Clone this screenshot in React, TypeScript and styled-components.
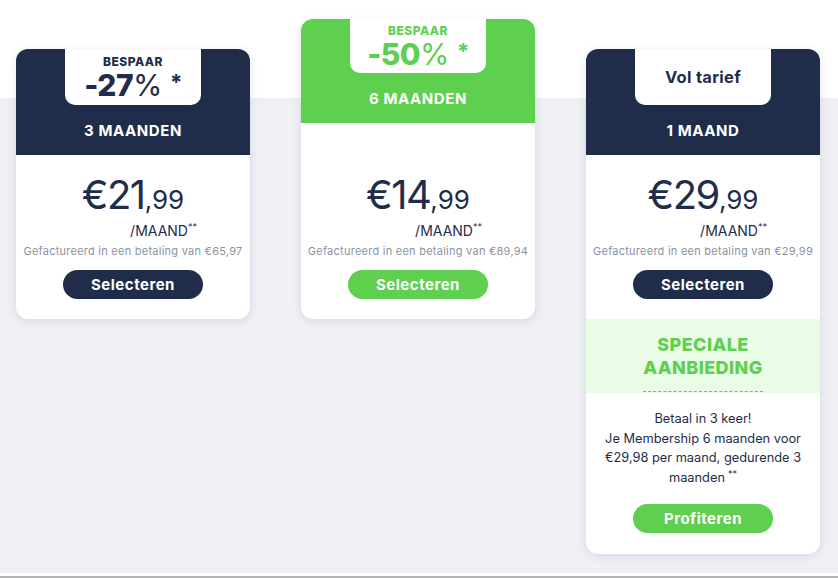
import React from "react";
import styled, { createGlobalStyle, css } from "styled-components";

const NAVY = "#1f2d4a";
const GREEN = "#5ecf4f";

const GlobalStyle = createGlobalStyle`
  html, body {
    margin: 0;
    padding: 0;
    background: #ffffff;
    font-family: "Inter", "Noto Sans", sans-serif;
    color: ${NAVY};
  }
`;

type Plan = {
  months: string;
  accent: "navy" | "green";
  save?: string;
  label?: string;
  whole: string;
  cents: string;
  billed: string;
  featured?: boolean;
  special?: boolean;
};

const plans: Plan[] = [
  { months: "3 MAANDEN", accent: "navy", save: "-27", whole: "€21", cents: ",99", billed: "€65,97" },
  { months: "6 MAANDEN", accent: "green", save: "-50", whole: "€14", cents: ",99", billed: "€89,94", featured: true },
  { months: "1 MAAND", accent: "navy", label: "Vol tarief", whole: "€29", cents: ",99", billed: "€29,99", special: true },
];

// Pricing section with the split white / grey backdrop
const Section = styled.section`
  height: 573px;
  box-sizing: border-box;
  padding: 19px 18px 0 16px;
  background: linear-gradient(#ffffff 0, #ffffff 98px, #eef0f4 98px);
  display: grid;
  grid-template-columns: repeat(3, 234px);
  column-gap: 51px;
  align-items: start;
`;

const Divider = styled.div`
  height: 3px;
  background: #ffffff;
  border-bottom: 2px solid #b3b3b3;
`;

const Card = styled.div<{ $featured?: boolean }>`
  margin-top: ${(p) => (p.$featured ? "0" : "30px")};
  background: #ffffff;
  border-radius: 12px;
  overflow: hidden;
  box-shadow: 0 2px 9px rgba(31, 45, 74, 0.12);
  display: flex;
  flex-direction: column;
`;

const Header = styled.div<{ $accent: "navy" | "green" }>`
  background: ${(p) => (p.$accent === "green" ? GREEN : NAVY)};
  display: flex;
  flex-direction: column;
  align-items: center;
`;

const Tab = styled.div<{ $featured?: boolean; $accent: "navy" | "green" }>`
  width: 136px;
  height: ${(p) => (p.$featured ? "54px" : "56px")};
  box-sizing: border-box;
  padding-top: 4px;
  background: #ffffff;
  border-radius: 0 0 10px 10px;
  display: flex;
  flex-direction: column;
  align-items: center;
  justify-content: center;
  color: ${(p) => (p.$accent === "green" ? GREEN : NAVY)};
`;

const Save = styled.div`
  font-size: 12px;
  font-weight: 800;
  line-height: 12px;
  letter-spacing: 0.5px;
  margin-top: -3px;
`;

const Percent = styled.div`
  font-size: 30px;
  line-height: 28px;
  margin-top: 3px;
  font-weight: 800;
  letter-spacing: -0.5px;
  span {
    font-weight: 400;
  }
  sup {
    font-size: 22px;
    font-weight: 700;
    margin-left: 8px;
    vertical-align: 6px;
    line-height: 0;
  }
`;

const FullRate = styled.div`
  margin-top: -4px;
  font-size: 16.5px;
  font-weight: 700;
  letter-spacing: 0.3px;
`;

const Months = styled.div`
  height: 50px;
  display: flex;
  align-items: center;
  color: #ffffff;
  font-size: 15px;
  font-weight: 700;
  letter-spacing: 0.6px;
`;

const Body = styled.div<{ $featured?: boolean }>`
  padding: ${(p) => (p.$featured ? "50px" : "18px")} 10px 20px;
  display: flex;
  flex-direction: column;
  align-items: center;
  text-align: center;
`;

const Price = styled.div`
  font-weight: 400;
  color: ${NAVY};
  line-height: 44px;
  white-space: nowrap;
`;

const Whole = styled.span`
  font-size: 40px;
  letter-spacing: -1.5px;
`;

const Cents = styled.span`
  font-size: 26px;
`;

const PerMonth = styled.div`
  align-self: flex-end;
  margin-right: 43px;
  margin-top: -3px;
  font-size: 14px;
  line-height: 17px;
  sup {
    font-size: 9px;
    vertical-align: 6px;
    line-height: 0;
  }
`;

const Billed = styled.div`
  margin-top: 6px;
  font-size: 11px;
  line-height: 13px;
  color: #8b93a1;
  white-space: nowrap;
  letter-spacing: 0.25px;
`;

const buttonBase = css`
  width: 140px;
  height: 29px;
  border: 0;
  border-radius: 15px;
  color: #ffffff;
  font-family: inherit;
  font-size: 15px;
  font-weight: 700;
  letter-spacing: 0.5px;
  cursor: pointer;
`;

const Button = styled.button<{ $accent: "navy" | "green" }>`
  ${buttonBase};
  margin-top: 12px;
  background: ${(p) => (p.$accent === "green" ? GREEN : NAVY)};
`;

const Offer = styled.div`
  background: #e9fce6;
  height: 74px;
  display: flex;
  align-items: flex-end;
  justify-content: center;
`;

const OfferTitle = styled.div`
  color: ${GREEN};
  font-size: 18px;
  font-weight: 800;
  line-height: 23px;
  letter-spacing: 0.4px;
  text-align: center;
  padding-bottom: 12px;
  border-bottom: 1px dashed ${GREEN};
  margin-bottom: 1px;
`;

const OfferBody = styled.div`
  padding: 16px 10px 21px;
  display: flex;
  flex-direction: column;
  align-items: center;
  text-align: center;
  font-size: 12.8px;
  line-height: 19.7px;
  color: ${NAVY};
  sup {
    font-size: 9px;
    vertical-align: 5px;
    line-height: 0;
    margin-left: 3px;
  }
`;

const OfferButton = styled.button`
  ${buttonBase};
  margin-top: 16px;
  background: ${GREEN};
`;

const PlanCard = ({ plan }: { plan: Plan }) => (
  <Card $featured={plan.featured}>
    <Header $accent={plan.accent}>
      <Tab $featured={plan.featured} $accent={plan.accent}>
        {plan.save ? (
          <>
            <Save>BESPAAR</Save>
            <Percent>
              {plan.save}
              <span>%</span>
              <sup>*</sup>
            </Percent>
          </>
        ) : (
          <FullRate>{plan.label}</FullRate>
        )}
      </Tab>
      <Months>{plan.months}</Months>
    </Header>
    <Body $featured={plan.featured}>
      <Price>
        <Whole>{plan.whole}</Whole>
        <Cents>{plan.cents}</Cents>
      </Price>
      <PerMonth>
        /MAAND<sup>**</sup>
      </PerMonth>
      <Billed>Gefactureerd in een betaling van {plan.billed}</Billed>
      <Button $accent={plan.accent}>Selecteren</Button>
    </Body>
    {plan.special && (
      <>
        <Offer>
          <OfferTitle>
            SPECIALE
            <br />
            AANBIEDING
          </OfferTitle>
        </Offer>
        <OfferBody>
          <div>
            Betaal in 3 keer!
            <br />
            Je Membership 6 maanden voor
            <br />
            €29,98 per maand, gedurende 3
            <br />
            maanden<sup>**</sup>
          </div>
          <OfferButton>Profiteren</OfferButton>
        </OfferBody>
      </>
    )}
  </Card>
);

const App = () => (
  <>
    <GlobalStyle />
    <Section>
      {plans.map((p) => (
        <PlanCard key={p.months} plan={p} />
      ))}
    </Section>
    <Divider />
  </>
);

export default App;
